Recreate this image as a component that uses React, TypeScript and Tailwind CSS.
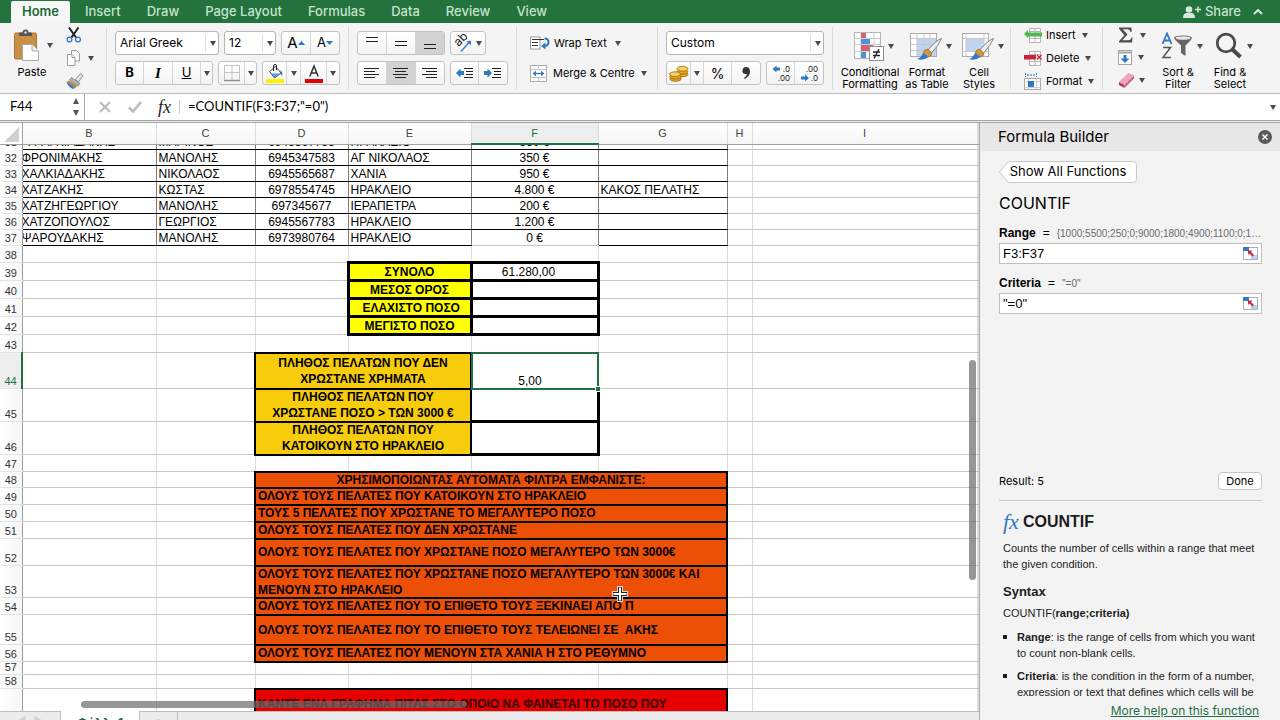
import type { ReactNode } from "react";

const TABS = ["Insert", "Draw", "Page Layout", "Formulas", "Data", "Review", "View"];

const COLUMNS = ["B", "C", "D", "E", "F", "G", "H", "I", ""];

const CLIENTS = [
  { row: 32, name: "ΦΡΟΝΙΜΑΚΗΣ", first: "ΜΑΝΟΛΗΣ", phone: "6945347583", city: "ΑΓ ΝΙΚΟΛΑΟΣ", debt: "350 €", note: "" },
  { row: 33, name: "ΧΑΛΚΙΑΔΑΚΗΣ", first: "ΝΙΚΟΛΑΟΣ", phone: "6945565687", city: "ΧΑΝΙΑ", debt: "950 €", note: "" },
  { row: 34, name: "ΧΑΤΖΑΚΗΣ", first: "ΚΩΣΤΑΣ", phone: "6978554745", city: "ΗΡΑΚΛΕΙΟ", debt: "4.800 €", note: "ΚΑΚΟΣ ΠΕΛΑΤΗΣ" },
  { row: 35, name: "ΧΑΤΖΗΓΕΩΡΓΙΟΥ", first: "ΜΑΝΟΛΗΣ", phone: "697345677", city: "ΙΕΡΑΠΕΤΡΑ", debt: "200 €", note: "" },
  { row: 36, name: "ΧΑΤΖΟΠΟΥΛΟΣ", first: "ΓΕΩΡΓΙΟΣ", phone: "6945567783", city: "ΗΡΑΚΛΕΙΟ", debt: "1.200 €", note: "" },
  { row: 37, name: "ΨΑΡΟΥΔΑΚΗΣ", first: "ΜΑΝΟΛΗΣ", phone: "6973980764", city: "ΗΡΑΚΛΕΙΟ", debt: "0 €", note: "" },
];

const TOTALS = [
  { row: 39, label: "ΣΥΝΟΛΟ", value: "61.280,00" },
  { row: 40, label: "ΜΕΣΟΣ ΟΡΟΣ", value: "" },
  { row: 41, label: " ΕΛΑΧΙΣΤΟ ΠΟΣΟ", value: "" },
  { row: 42, label: "ΜΕΓΙΣΤΟ ΠΟΣΟ", value: "" },
];

const COUNTS = [
  { row: 44, height: "h-[36px]", lines: ["ΠΛΗΘΟΣ ΠΕΛΑΤΩΝ ΠΟΥ ΔΕΝ", "ΧΡΩΣΤΑΝΕ ΧΡΗΜΑΤΑ"] },
  { row: 45, height: "h-[33px]", lines: ["ΠΛΗΘΟΣ ΠΕΛΑΤΩΝ ΠΟΥ", "ΧΡΩΣΤΑΝΕ ΠΟΣΟ > ΤΩΝ 3000 €"] },
  { row: 46, height: "h-[33px]", lines: ["ΠΛΗΘΟΣ ΠΕΛΑΤΩΝ ΠΟΥ", "ΚΑΤΟΙΚΟΥΝ ΣΤΟ ΗΡΑΚΛΕΙΟ"] },
];

const FILTERS = [
  { row: 48, height: "h-[16px]", lines: ["ΧΡΗΣΙΜΟΠΟΙΩΝΤΑΣ ΑΥΤΟΜΑΤΑ ΦΙΛΤΡΑ ΕΜΦΑΝΙΣΤΕ:"] },
  { row: 49, height: "h-[17px]", lines: ["ΟΛΟΥΣ ΤΟΥΣ ΠΕΛΑΤΕΣ ΠΟΥ ΚΑΤΟΙΚΟΥΝ ΣΤΟ ΗΡΑΚΛΕΙΟ"] },
  { row: 50, height: "h-[17px]", lines: ["ΤΟΥΣ 5 ΠΕΛΑΤΕΣ ΠΟΥ ΧΡΩΣΤΑΝΕ ΤΟ ΜΕΓΑΛΥΤΕΡΟ ΠΟΣΟ"] },
  { row: 51, height: "h-[17px]", lines: ["ΟΛΟΥΣ ΤΟΥΣ ΠΕΛΑΤΕΣ ΠΟΥ ΔΕΝ ΧΡΩΣΤΑΝΕ"] },
  { row: 52, height: "h-[27px]", lines: ["ΟΛΟΥΣ ΤΟΥΣ ΠΕΛΑΤΕΣ ΠΟΥ ΧΡΩΣΤΑΝΕ ΠΟΣΟ ΜΕΓΑΛΥΤΕΡΟ ΤΩΝ 3000€"] },
  { row: 53, height: "h-[32px]", lines: ["ΟΛΟΥΣ ΤΟΥΣ ΠΕΛΑΤΕΣ ΠΟΥ ΧΡΩΣΤΑΝΕ ΠΟΣΟ ΜΕΓΑΛΥΤΕΡΟ ΤΩΝ 3000€ ΚΑΙ", "ΜΕΝΟΥΝ ΣΤΟ ΗΡΑΚΛΕΙΟ"] },
  { row: 54, height: "h-[17px]", lines: ["ΟΛΟΥΣ ΤΟΥΣ ΠΕΛΑΤΕΣ ΠΟΥ ΤΟ ΕΠΙΘΕΤΟ ΤΟΥΣ ΞΕΚΙΝΑΕΙ ΑΠΟ Π"] },
  { row: 55, height: "h-[30px]", lines: ["ΟΛΟΥΣ ΤΟΥΣ ΠΕΛΑΤΕΣ ΠΟΥ ΤΟ ΕΠΙΘΕΤΟ ΤΟΥΣ ΤΕΛΕΙΩΝΕΙ ΣΕ  ΑΚΗΣ"] },
  { row: 56, height: "h-[17px]", lines: ["ΟΛΟΥΣ ΤΟΥΣ ΠΕΛΑΤΕΣ ΠΟΥ ΜΕΝΟΥΝ ΣΤΑ ΧΑΝΙΑ Η ΣΤΟ ΡΕΘΥΜΝΟ"] },
];

function Caret({ className = "" }: { className?: string }) {
  return (
    <svg viewBox="0 0 6 5" className={`h-[5px] w-[6px] shrink-0 fill-[#4a4a4a] ${className}`}>
      <path d="M0 0h6L3 5z" />
    </svg>
  );
}

function Divider() {
  return <div className="my-1 w-px shrink-0 bg-[#d9d9d9]" />;
}

/* Bordered strip that holds a run of small toolbar buttons */
function Strip({ children }: { children: ReactNode }) {
  return (
    <div className="flex h-[24px] shrink-0 divide-x divide-[#d4d4d4] overflow-hidden rounded-[3px] border border-[#c3c3c3] bg-linear-to-b from-white to-[#f3f3f3]">
      {children}
    </div>
  );
}

function Tool({ label, width, active, children }: { label: string; width: string; active?: boolean; children: ReactNode }) {
  return (
    <button aria-label={label} className={`flex items-center justify-center ${width} ${active ? "bg-[#d2d2d2]" : ""}`}>
      {children}
    </button>
  );
}

function Picker({ label, value, width }: { label: string; value: string; width: string }) {
  return (
    <div className={`relative ${width}`}>
      <select
        aria-label={label}
        defaultValue={value}
        className="h-[24px] w-full appearance-none rounded-[3px] border border-[#b5b5b5] bg-white pl-1 text-[12px] leading-[20px] text-black"
      >
        <option>{value}</option>
      </select>
      <span className="pointer-events-none absolute inset-y-[3px] right-0 flex w-[14px] items-center justify-center border-l border-[#e2e2e2]">
        <Caret />
      </span>
    </div>
  );
}

function Bars({ rows }: { rows: [number, number, number][] }) {
  return (
    <svg viewBox="0 0 16 12" className="h-[12px] w-[16px]" stroke="#222" strokeWidth="1">
      {rows.map(([x1, x2, y]) => (
        <path key={y} d={`M${x1} ${y}.5H${x2}`} />
      ))}
    </svg>
  );
}

function PasteIcon() {
  return (
    <svg viewBox="0 0 26 32" className="h-[32px] w-[26px]">
      <rect x="0.5" y="4" width="22" height="26" rx="1.5" fill="#c98f45" stroke="#a87433" />
      <path d="M5 7V4.500q0-1 1-1h2.500a3 3 0 0 1 6 0H17q1 0 1 1V7z" fill="#565656" />
      <circle cx="11.500" cy="3.500" r="1.200" fill="#ddd" />
      <path d="M8.500 15.500h9.500l6.500 6.500v9.500h-16z" fill="#fff" stroke="#a9a9a9" />
      <path d="M18 15.500v6.500h6.500" fill="#eee" stroke="#a9a9a9" />
    </svg>
  );
}

function ScissorsIcon() {
  return (
    <svg viewBox="0 0 16 16" className="h-[16px] w-[16px]" fill="none">
      <path d="M3 .5l7 10M12.500 .5l-7 10" stroke="#222" strokeWidth="2" />
      <circle cx="3.500" cy="12.500" r="2.400" stroke="#2f78c4" strokeWidth="1.300" />
      <circle cx="12" cy="12.500" r="2.400" stroke="#2f78c4" strokeWidth="1.300" />
    </svg>
  );
}

function CopyIcon() {
  return (
    <svg viewBox="0 0 16 16" className="h-[16px] w-[16px]" fill="#fff" stroke="#9b9b9b">
      <path d="M5.500 .5h5l3 3v7.500h-8z" />
      <path d="M1.500 4.500h4.500l3 3v8h-7.500z" />
      <path d="M6 4.500v3h3" />
    </svg>
  );
}

function BrushIcon() {
  return (
    <svg viewBox="0 0 18 16" className="h-[16px] w-[18px]">
      <path d="M9.500 6.500l5-6 2.500 2L12.500 9z" fill="#e4e4e4" stroke="#777" strokeWidth=".8" />
      <path d="M5.500 4.500l8.500 6-2 2.500L3.500 7z" fill="#b3b3b3" stroke="#666" strokeWidth=".6" />
      <path d="M3 7.500l8.500 5.500-3 2.500L.5 9z" fill="#b98a4e" />
      <path d="M.5 8.500l8 6.500-1.500 1Q2 14 .5 8.500z" fill="#2f78c4" />
    </svg>
  );
}

function FillIcon() {
  return (
    <svg viewBox="0 0 18 19" className="h-[19px] w-[18px]">
      <path d="M3.500 7.500L9.500 2.500l5.500 6.500-6.500 5z" fill="#f5f5f5" stroke="#444" />
      <path d="M4.500 9.500h9.500L8.500 13.500z" fill="#5b9bdb" />
      <path d="M7.500 7V2q0-1.500 1.500-1.500T10.500 2v4" fill="none" stroke="#222" />
      <path d="M14.500 6q2.500 2 1.500 6-1.500-1-1.500-6" fill="#2f78c4" />
      <rect x="0" y="15" width="18" height="4" fill="#fff200" />
    </svg>
  );
}

function FontColorIcon() {
  return (
    <svg viewBox="0 0 18 19" className="h-[19px] w-[18px]">
      <path d="M4.800 12.500L9 2l4.200 10.500M6.300 9h5.400" fill="none" stroke="#333" strokeWidth="1.500" />
      <rect x="0" y="15" width="18" height="4" fill="#e40000" />
    </svg>
  );
}

function BordersIcon() {
  return (
    <svg viewBox="0 0 18 18" className="h-[18px] w-[18px]" fill="none" stroke="#c4c4c4">
      <path d="M1.500 1.500h15v14M1.500 1.500v14M9 1.500v14M1.500 8.500h15" />
      <path d="M1 16.500h16" stroke="#8c8c8c" strokeWidth="1.500" />
    </svg>
  );
}

function OrientationIcon() {
  return (
    <svg viewBox="0 0 18 18" className="h-[18px] w-[18px] overflow-visible">
      <text fontSize="12" fontFamily="Inter, sans-serif" transform="translate(4.500 13) rotate(-45)" fill="#222">
        ab
      </text>
      <path d="M7 17.500l8-9" stroke="#2f78c4" strokeWidth="1.300" />
      <path d="M17 6.500v4.500L12.500 7.500z" fill="#2f78c4" />
    </svg>
  );
}

function IndentIcon({ left }: { left?: boolean }) {
  return (
    <svg viewBox="0 0 18 12" className="h-[12px] w-[18px]">
      {left ? (
        <path d="M0 6l4.500-4.500v2.500h3.500v4H4.500v2.500z" fill="#2f78c4" />
      ) : (
        <path d="M8 6L3.500 1.500v2.500H0v4h3.500v2.500z" fill="#2f78c4" />
      )}
      <path d="M8 1.500h9M10 4.500h7M10 7.500h7M8 10.500h9" stroke="#222" />
    </svg>
  );
}

function WrapIcon() {
  return (
    <svg viewBox="0 0 20 14" className="h-[14px] w-[20px]" fill="none">
      <rect x=".5" y="1" width="9.500" height="12" fill="#fff" stroke="#999" />
      <path d="M2 3.500h12M2 6.500h6M2 9.500h6" stroke="#333" />
      <path d="M14.500 2.500q4 0 4 3.500t-4 4" stroke="#2f78c4" strokeWidth="2" />
      <path d="M15.500 6.500v7L11 10z" fill="#2f78c4" />
    </svg>
  );
}

function MergeIcon() {
  return (
    <svg viewBox="0 0 17 17" className="h-[17px] w-[17px]" fill="none">
      <rect x=".5" y=".5" width="16" height="16" fill="#fff" stroke="#a9a9a9" />
      <path d="M.5 4.500h16M.5 12.500h16M8.500 .5v4M8.500 12.500v4" stroke="#c4c4c4" />
      <path d="M4 8.500h9" stroke="#2f78c4" strokeWidth="1.300" />
      <path d="M6 5.800v5.400L2.500 8.500zM11 5.800v5.400l3.500-2.700z" fill="#2f78c4" />
    </svg>
  );
}

function CoinsIcon() {
  return (
    <svg viewBox="0 0 20 17" className="h-[17px] w-[20px]" stroke="#8c5a0a" strokeWidth=".7">
      <g fill="#e8a822">
        <ellipse cx="13.500" cy="9.500" rx="5.500" ry="2.200" />
        <ellipse cx="13.500" cy="6.800" rx="5.500" ry="2.200" />
        <ellipse cx="13.500" cy="3.800" rx="5.500" ry="2.400" fill="#f7cf5b" />
        <ellipse cx="6.500" cy="14" rx="5.700" ry="2.300" />
        <ellipse cx="6.500" cy="11.800" rx="5.700" ry="2.300" />
        <ellipse cx="6" cy="9.200" rx="5.500" ry="2.400" fill="#f7cf5b" />
      </g>
    </svg>
  );
}

function DecimalIcon({ more }: { more?: boolean }) {
  return (
    <svg viewBox="0 0 20 17" className="h-[17px] w-[20px]" fontFamily="Inter, sans-serif" fontSize="8" fill="#222">
      <text x="19" y="7" textAnchor="end">{more ? ".0" : ".00"}</text>
      <text x="19" y="16" textAnchor="end">{more ? ".00" : ".0"}</text>
      {more ? (
        <path d="M1.500 4l4-3.500v2H9v3H5.500v2z" fill="#2f78c4" />
      ) : (
        <path d="M10 13L6 9.500v2H2v3h4v2z" fill="#2f78c4" />
      )}
    </svg>
  );
}

function ConditionalIcon() {
  return (
    <svg viewBox="0 0 30 29" className="h-[29px] w-[30px]">
      <rect x=".5" y=".5" width="26" height="26" fill="#fff" stroke="#b5b5b5" />
      <path d="M.5 6.500h26M.5 12.500h26M.5 19.500h26M7 .5v26M20 .5v26" stroke="#ccc" />
      <path d="M7 1h5v5H7zM7 13h12v6H7z" fill="#d9616e" />
      <path d="M7 7h9v5H7zM7 20h5v6H7z" fill="#4d93d9" />
      <rect x="15.500" y="14.500" width="14" height="14" fill="#fff" stroke="#8c8c8c" />
      <path d="M19 20h7M19 23.500h7M25 17l-5 9.500" stroke="#222" strokeWidth="1.300" />
    </svg>
  );
}

function TableBrushIcon({ plain }: { plain?: boolean }) {
  return (
    <svg viewBox="0 0 32 29" className="h-[29px] w-[32px]">
      <rect x=".5" y="1.500" width="26" height="23" fill="#fff" stroke="#aaa" />
      <path d={plain ? "M4 7h18v12H4z" : "M7 7h19v17H7z"} fill="#bdd5f0" />
      <path
        d={plain ? "M.5 6.500h26M.5 19.500h26M4 1.500v23M22 1.500v23" : "M.5 6.500h26M.5 12.500h26M.5 18.500h26M7 1.500v23M14 1.500v23M20 1.500v23"}
        fill="none"
        stroke="#c8c8c8"
      />
      <path d="M31.500 6.500Q25 9 18 18l3.500 3Q29 13 31.500 6.500z" fill="#eee" stroke="#777" strokeWidth=".9" />
      <path d="M18 17q-4 0-5 4l5.500 4q4-1 3-4z" fill="#cf9440" stroke="#94682a" strokeWidth=".6" />
      <path d="M13 21q-2 5-6 6 6 2 11.500-2z" fill="#2f78c4" />
    </svg>
  );
}

function CellsIcon({ kind }: { kind: string }) {
  return (
    <svg viewBox="0 0 18 17" className="h-[17px] w-[18px]" fill="none">
      {kind === "Format" ? (
        <>
          <path d="M1.500 0v4M12.500 0v4M3 2h8" stroke="#2f78c4" strokeDasharray="2 1" />
          <rect x=".5" y="5.500" width="16" height="11" fill="#fff" stroke="#a9a9a9" />
          <path d="M4.500 5.500v11M12.500 5.500v11M.5 8.500h16M.5 14.500h16" stroke="#d0d0d0" />
          <rect x="4" y="8" width="6" height="6" fill="#2f78c4" />
        </>
      ) : (
        <>
          <path d="M5.500 1.500h11v14h-11zM11 1v15M5 11.500h12M5 4.500h12" fill="#fff" stroke="#b5b5b5" />
          {kind === "Insert" ? (
            <path d="M0 7l4-4v2.500h14v4H4V11z" fill="#4db848" />
          ) : (
            <>
              <path d="M0 5h12v4.500H0z" fill="#cf2438" />
              <path d="M13 5l4.500 4.500M17.500 5L13 9.500" stroke="#cf2438" strokeWidth="1.500" />
            </>
          )}
        </>
      )}
    </svg>
  );
}

function SigmaIcon() {
  return (
    <svg viewBox="0 0 16 16" className="h-[16px] w-[16px]" fill="#4d4d4d">
      <path d="M1 .5h12.500V5h-1Q12 2.300 9.500 2.300H4.800l4.700 5.200-5.200 5.700h6q2.700 0 3.200-2.700h1L14 15.500H1v-1.300l5.300-6L1 1.800z" />
    </svg>
  );
}

function FillDownIcon() {
  return (
    <svg viewBox="0 0 14 15" className="h-[15px] w-[14px]">
      <rect x=".5" y=".5" width="13" height="14" fill="#fff" stroke="#a5a5a5" />
      <path d="M.5 2.500h13" stroke="#a5a5a5" strokeWidth="2" />
      <path d="M5.500 5h3v3.500h3L7 13 2.500 8.500h3z" fill="#2f78c4" />
    </svg>
  );
}

function EraserIcon() {
  return (
    <svg viewBox="0 0 17 16" className="h-[16px] w-[17px]">
      <path d="M1 10l9.500-9 5.500 2.500-9.500 9.500z" fill="#f0a3bd" />
      <path d="M1 10l5.500 3v3L1 13z" fill="#a83e60" />
      <path d="M6.500 13L16 3.500v3L6.500 16z" fill="#d0607f" />
    </svg>
  );
}

function SortFilterIcon() {
  return (
    <svg viewBox="0 0 32 28" className="h-[28px] w-[32px]">
      <path d="M1.500 12L6 1.500 10.500 12M3 8.500h6" fill="none" stroke="#2f78c4" strokeWidth="1.800" />
      <path d="M2 15.500h7.500L2 25.500h8" fill="none" stroke="#555" strokeWidth="1.500" />
      <path d="M13 6q0-2.500 9-2.500T31 6q0 1-6.500 7.500V24L20 21v-7.500Q13 7 13 6z" fill="#666" />
      <ellipse cx="22" cy="6" rx="7.500" ry="1.800" fill="#e6e6e6" />
    </svg>
  );
}

function SearchIcon() {
  return (
    <svg viewBox="0 0 28 28" className="h-[28px] w-[28px]" fill="none" stroke="#4a4a4a">
      <circle cx="11" cy="11" r="8.800" strokeWidth="2.700" />
      <path d="M17.500 17.500l8 7.500" strokeWidth="4" />
    </svg>
  );
}

function ShareIcon() {
  return (
    <svg viewBox="0 0 18 14" className="h-[14px] w-[18px] fill-[#d3ebdc]">
      <circle cx="6" cy="4.500" r="3.300" />
      <path d="M0 13q0-5 4-5h4q4 0 4 5z" />
      <path d="M12 4.500h6M15 1.500v6" stroke="#d3ebdc" strokeWidth="1.500" />
    </svg>
  );
}

function BigTool({ lines, icon, width }: { lines: string[]; icon: ReactNode; width: string }) {
  return (
    <button className={`flex flex-col items-center pt-[3px] ${width}`}>
      <span className="flex h-[32px] items-center gap-1 pl-2">
        {icon}
        <Caret />
      </span>
      <span className="mt-1 text-[11px] leading-[12px] text-black">
        {lines.map((line) => (
          <span key={line} className="block whitespace-nowrap">
            {line}
          </span>
        ))}
      </span>
    </button>
  );
}

function Ribbon() {
  return (
    <div className="flex h-[71px] shrink-0 overflow-hidden border-b border-[#bdbdbd] bg-[#f4f4f4] text-[11px] text-black">
      <div className="flex w-[106px] shrink-0 pl-[12px]">
        <button className="flex w-[44px] flex-col items-start pt-1">
          <span className="flex h-[36px] items-center gap-[7px] pl-[2px]">
            <PasteIcon />
            <Caret />
          </span>
          <span className="w-[40px] pt-[3px] text-center leading-[12px]">Paste</span>
        </button>
        <div className="flex flex-col gap-[7px] pt-1 pl-[10px]">
          <button aria-label="Cut"><ScissorsIcon /></button>
          <button aria-label="Copy" className="flex items-center gap-[6px]"><CopyIcon /><Caret /></button>
          <button aria-label="Format painter"><BrushIcon /></button>
        </div>
      </div>
      <Divider />

      <div className="flex shrink-0 flex-col justify-center gap-[6px] px-2">
        <div className="flex gap-[5px]">
          <Picker label="Font" value="Arial Greek" width="w-[104px]" />
          <Picker label="Font size" value="12" width="w-[52px]" />
          <Strip>
            <Tool label="Increase font size" width="w-[29px]">
              <span className="text-[15px]">A</span>
              <svg viewBox="0 0 7 4" className="h-[4px] w-[7px] fill-[#2f78c4]"><path d="M0 4h7L3.500 0z" /></svg>
            </Tool>
            <Tool label="Decrease font size" width="w-[28px]">
              <span className="text-[13px]">A</span>
              <svg viewBox="0 0 7 4" className="h-[4px] w-[7px] fill-[#2f78c4]"><path d="M0 0h7L3.500 4z" /></svg>
            </Tool>
          </Strip>
        </div>
        <div className="flex gap-[5px]">
          <Strip>
            <Tool label="Bold" width="w-[28px]"><b className="text-[13px]">B</b></Tool>
            <Tool label="Italic" width="w-[29px]"><i className="font-['Liberation_Serif',serif] text-[15px] font-bold">I</i></Tool>
            <Tool label="Underline" width="w-[28px]"><u className="text-[13px]">U</u></Tool>
            <Tool label="Underline style" width="w-[11px]"><Caret /></Tool>
          </Strip>
          <Strip>
            <Tool label="Borders" width="w-[26px]"><BordersIcon /></Tool>
            <Tool label="Border style" width="w-[11px]"><Caret /></Tool>
          </Strip>
          <Strip>
            <Tool label="Fill colour" width="w-[24px]"><FillIcon /></Tool>
            <Tool label="Fill colours" width="w-[14px]"><Caret /></Tool>
            <Tool label="Font colour" width="w-[26px]"><FontColorIcon /></Tool>
            <Tool label="Font colours" width="w-[12px]"><Caret /></Tool>
          </Strip>
        </div>
      </div>
      <Divider />

      <div className="flex shrink-0 flex-col justify-center gap-[6px] px-2">
        <div className="flex gap-[5px]">
          <Strip>
            <Tool label="Align top" width="w-[29px]"><Bars rows={[[2, 14, 0], [2, 14, 4]]} /></Tool>
            <Tool label="Align middle" width="w-[29px]"><Bars rows={[[2, 14, 4], [2, 14, 8]]} /></Tool>
            <Tool label="Align bottom" width="w-[28px]" active><Bars rows={[[2, 14, 7], [2, 14, 11]]} /></Tool>
          </Strip>
          <Strip>
            <Tool label="Orientation" width="w-[34px]">
              <span className="flex items-center gap-1"><OrientationIcon /><Caret /></span>
            </Tool>
          </Strip>
        </div>
        <div className="flex gap-[5px]">
          <Strip>
            <Tool label="Align left" width="w-[29px]"><Bars rows={[[0, 15, 1], [0, 11, 4], [0, 15, 7], [0, 11, 10]]} /></Tool>
            <Tool label="Centre" width="w-[29px]" active><Bars rows={[[0, 15, 1], [2, 13, 4], [0, 15, 7], [2, 13, 10]]} /></Tool>
            <Tool label="Align right" width="w-[28px]"><Bars rows={[[0, 15, 1], [4, 15, 4], [0, 15, 7], [4, 15, 10]]} /></Tool>
          </Strip>
          <Strip>
            <Tool label="Decrease indent" width="w-[28px]"><IndentIcon left /></Tool>
            <Tool label="Increase indent" width="w-[28px]"><IndentIcon /></Tool>
          </Strip>
        </div>
      </div>
      <Divider />

      <div className="flex w-[140px] shrink-0 flex-col justify-center gap-[6px] pl-[13px]">
        <button className="flex h-[24px] items-center gap-1 whitespace-nowrap">
          <WrapIcon />
          Wrap Text
          <Caret className="ml-1" />
        </button>
        <button className="flex h-[24px] items-center gap-[6px] whitespace-nowrap">
          <MergeIcon />
          Merge &amp; Centre
          <Caret />
        </button>
      </div>
      <Divider />

      <div className="flex shrink-0 flex-col justify-center gap-[6px] px-2">
        <Picker label="Number format" value="Custom" width="w-full" />
        <div className="flex gap-[5px]">
          <Strip>
            <Tool label="Currency" width="w-[24px]"><CoinsIcon /></Tool>
            <Tool label="Currencies" width="w-[13px]"><Caret /></Tool>
            <Tool label="Percent" width="w-[28px]"><span className="text-[14px]">%</span></Tool>
            <Tool label="Thousands separator" width="w-[28px]">
              <svg viewBox="0 0 8 12" className="h-[12px] w-[8px] fill-[#333]"><path d="M4 0q4 0 4 4.500Q8 9 2.500 12L2 11q3-2 3-4Q0 7.500 .5 3.500 .8 0 4 0z" /></svg>
            </Tool>
          </Strip>
          <Strip>
            <Tool label="Increase decimals" width="w-[28px]"><DecimalIcon more /></Tool>
            <Tool label="Decrease decimals" width="w-[28px]"><DecimalIcon /></Tool>
          </Strip>
        </div>
      </div>
      <Divider />

      <div className="flex shrink-0 pt-1 pr-[6px] pl-[7px]">
        <BigTool lines={["Conditional", "Formatting"]} icon={<ConditionalIcon />} width="w-[60px]" />
        <BigTool lines={["Format", "as Table"]} icon={<TableBrushIcon />} width="w-[54px]" />
        <BigTool lines={["Cell", "Styles"]} icon={<TableBrushIcon plain />} width="w-[50px]" />
      </div>
      <Divider />

      <div className="flex w-[91px] shrink-0 flex-col justify-center gap-[6px] pl-[13px]">
        {["Insert", "Delete", "Format"].map((kind) => (
          <button key={kind} className="flex h-[17px] items-center gap-1">
            <CellsIcon kind={kind} />
            {kind}
            <Caret className="ml-[2px]" />
          </button>
        ))}
      </div>
      <Divider />

      <div className="flex shrink-0 pt-1 pl-[15px]">
        <div className="flex flex-col gap-[7px] pr-[7px]">
          <button aria-label="AutoSum" className="flex items-center gap-[6px]"><SigmaIcon /><Caret /></button>
          <button aria-label="Fill" className="flex items-center gap-[6px]"><FillDownIcon /><Caret /></button>
          <button aria-label="Clear" className="flex items-center gap-1"><EraserIcon /><Caret /></button>
        </div>
        <BigTool lines={["Sort &", "Filter"]} icon={<SortFilterIcon />} width="w-[50px]" />
        <BigTool lines={["Find &", "Select"]} icon={<SearchIcon />} width="w-[54px]" />
      </div>
    </div>
  );
}

function FormulaBar() {
  return (
    <div className="flex h-[27px] shrink-0 items-center border-b border-[#a3a3a3] bg-white">
      <div className="flex h-full w-[85px] items-center justify-between border-r border-[#a9a9a9] pr-1 pl-[10px]">
        <input
          aria-label="Name box"
          defaultValue="F44"
          className="w-[50px] bg-transparent font-['Lato',sans-serif] text-[13px] outline-none"
        />
        <svg viewBox="0 0 8 18" className="h-[18px] w-[8px] fill-[#555]">
          <path d="M1 6h6L4 0zM1 12h6l-3 6z" />
        </svg>
      </div>
      <button aria-label="Cancel" className="ml-[14px]">
        <svg viewBox="0 0 12 12" className="h-[12px] w-[12px]" stroke="#b9b9b9" strokeWidth="2"><path d="M1 1l10 10M11 1L1 11" /></svg>
      </button>
      <button aria-label="Enter" className="ml-[17px]">
        <svg viewBox="0 0 14 12" className="h-[12px] w-[14px]" fill="none" stroke="#b9b9b9" strokeWidth="2.500"><path d="M1 6.500l4 4L13 1" /></svg>
      </button>
      <span className="ml-[16px] font-['Liberation_Serif',serif] text-[18px] text-[#222] italic">fx</span>
      <div className="mx-2 h-[14px] w-px bg-[#ccc]" />
      <input
        aria-label="Formula"
        defaultValue={'=COUNTIF(F3:F37;"=0")'}
        className="min-w-0 flex-1 bg-transparent font-['Lato',sans-serif] text-[13px] outline-none"
      />
      <Caret className="mr-1" />
    </div>
  );
}

const cell = "border-r border-b border-r-[#dcdcdc] border-b-[#c6c6c6] p-0";
const dataCell = "border-r border-b border-r-[#808080] border-b-black px-[2px] py-0 whitespace-nowrap";

function Blank({ count, className = cell }: { count: number; className?: string }) {
  return (
    <>
      {Array.from({ length: count }, (_, i) => (
        <td key={i} className={className} />
      ))}
    </>
  );
}

function RowHead({ row, active }: { row?: number; active?: boolean }) {
  return (
    <th
      scope="row"
      className={`border-b border-b-[#e3e3e3] p-0 pb-[2px] text-center align-bottom text-[11px] leading-[10px] font-normal ${
        active
          ? "border-r-2 border-r-[#1d7042] bg-[#eeeeee] text-[#1d7042]"
          : "border-r border-r-[#9b9b9b] bg-linear-to-r from-white to-[#f6f6f6] text-[#333]"
      }`}
    >
      {row}
    </th>
  );
}

/* Text taller than its row may hang over the cell borders */
function Lines({ lines }: { lines: string[] }) {
  return (
    <div className="-my-1 leading-[16px] whitespace-pre">
      {lines.map((line) => (
        <div key={line}>{line}</div>
      ))}
    </div>
  );
}

function Cut({ children, center }: { children: ReactNode; center?: boolean }) {
  return (
    <div className={`flex h-[4px] items-end overflow-hidden leading-[14px] whitespace-nowrap ${center ? "justify-center" : ""}`}>
      {children}
    </div>
  );
}

function Sheet() {
  return (
    <table className="w-full table-fixed border-collapse font-['Liberation_Sans',Arial,sans-serif] text-[12px] text-black">
      <colgroup>
        <col className="w-[22px]" />
        <col className="w-[134px]" />
        <col className="w-[99px]" />
        <col className="w-[93px]" />
        <col className="w-[123px]" />
        <col className="w-[127px]" />
        <col className="w-[129px]" />
        <col className="w-[25px]" />
        <col className="w-[225px]" />
        <col />
      </colgroup>
      <thead>
        <tr className="h-[21px]">
          <td className="border-r border-b border-[#a3a3a3] p-0 align-bottom">
            <svg viewBox="0 0 15 15" className="mb-[2px] ml-1 h-[15px] w-[15px] fill-[#d0d0d0]"><path d="M15 0v15H0z" /></svg>
          </td>
          {COLUMNS.map((name) => (
            <th
              key={name}
              scope="col"
              className={`border-r border-b p-0 text-[11px] font-normal ${
                name === "F"
                  ? "border-r-[#dcdcdc] border-b-2 border-b-[#1d7042] bg-[#eeeeee] text-[#1d7042]"
                  : "border-r-[#dcdcdc] border-b-[#a3a3a3] bg-linear-to-b from-white to-[#f5f5f5] text-[#444]"
              }`}
            >
              {name}
            </th>
          ))}
        </tr>
      </thead>
      <tbody>
        <tr className="h-[5px]">
          <th scope="row" className="border-r border-r-[#9b9b9b] p-0 text-[11px] font-normal text-[#333]"><Cut center>31</Cut></th>
          <td className={dataCell}><Cut>ΦΡΑΓΚΙΑΔΑΚΗΣ</Cut></td>
          <td className={dataCell}><Cut>ΜΑΡΙΝΟΣ</Cut></td>
          <td className={dataCell}><Cut center>6945567785</Cut></td>
          <td className={dataCell}><Cut>ΗΡΑΚΛΕΙΟ</Cut></td>
          <td className={dataCell}><Cut center>350 €</Cut></td>
          <td className={dataCell} />
          <Blank count={3} />
        </tr>
        {CLIENTS.map((c) => (
          <tr key={c.row} className="h-[16px] leading-[14px]">
            <RowHead row={c.row} />
            <td className="overflow-hidden border-r border-b border-r-[#808080] border-b-black p-0 whitespace-nowrap">
              <div className="-ml-px">{c.name}</div>
            </td>
            <td className={dataCell}>{c.first}</td>
            <td className={`${dataCell} text-center`}>{c.phone}</td>
            <td className={dataCell}>{c.city}</td>
            <td className={`${c.row === 37 ? "border-r border-b border-r-[#808080] border-b-[#c6c6c6] p-0" : dataCell} text-center`}>{c.debt}</td>
            <td className={dataCell}>{c.note}</td>
            <Blank count={3} />
          </tr>
        ))}
        <tr className="h-[17px]">
          <RowHead row={38} />
          <Blank count={9} />
        </tr>
        {TOTALS.map((t) => (
          <tr key={t.row} className="h-[18px] leading-[14px]">
            <RowHead row={t.row} />
            <Blank count={3} />
            <td className="border-3 border-black bg-[#ffff00] p-0 text-center font-bold whitespace-pre">{t.label}</td>
            <td className="border-3 border-black p-0 pr-[12px] text-center">{t.value}</td>
            <Blank count={4} />
          </tr>
        ))}
        <tr className="h-[18px]">
          <RowHead row={43} />
          <Blank count={9} />
        </tr>
        {COUNTS.map((c) => (
          <tr key={c.row} className={c.height}>
            <RowHead row={c.row} active={c.row === 44} />
            <Blank count={2} />
            <td colSpan={2} className="border-2 border-black bg-[#f7cd0b] p-0 text-center font-bold">
              <Lines lines={c.lines} />
            </td>
            {c.row === 44 ? (
              <td className="relative p-0 pr-[10px] text-center align-bottom leading-[16px]">
                5,00
                <span className="absolute -inset-px border-2 border-[#1d7042]" />
                <span className="absolute -right-[3px] -bottom-[3px] h-[6px] w-[6px] border border-white bg-[#1d7042]" />
              </td>
            ) : (
              <td className="border-r-3 border-b-3 border-black p-0" />
            )}
            <Blank count={4} />
          </tr>
        ))}
        <tr className="h-[17px]">
          <RowHead row={47} />
          <Blank count={9} />
        </tr>
        {FILTERS.map((f) => (
          <tr key={f.row} className={f.height}>
            <RowHead row={f.row} />
            <Blank count={2} />
            <td colSpan={4} className={`border-2 border-black bg-[#ec4f06] px-[2px] py-0 font-bold ${f.row === 48 ? "text-center" : ""}`}>
              <Lines lines={f.lines} />
            </td>
            <Blank count={3} />
          </tr>
        ))}
        <tr className="h-[13px]">
          <RowHead row={57} />
          <Blank count={9} />
        </tr>
        <tr className="h-[14px]">
          <RowHead row={58} />
          <Blank count={9} />
        </tr>
        <tr className="h-[31px]">
          <RowHead />
          <Blank count={2} />
          <td colSpan={4} className="border-2 border-black bg-[#e60000] px-[2px] py-0 font-bold text-[#2a0000]">
            <Lines lines={["ΚΑΝΤΕ ΕΝΑ ΓΡΑΦΗΜΑ ΠΙΤΑΣ ΣΤΟ ΟΠΟΙΟ ΝΑ ΦΑΙΝΕΤΑΙ ΤΟ ΠΟΣΟ ΠΟΥ"]} />
          </td>
          <Blank count={3} />
        </tr>
      </tbody>
    </table>
  );
}

function SheetTabs() {
  return (
    <div className="flex h-[9px] shrink-0 overflow-hidden bg-[#ececec] text-[12px] leading-[20px]">
      <div className="flex w-[61px] justify-around border-t border-r border-[#bdbdbd] px-3 text-[#d2d2d2]">
        <span>◀</span>
        <span>▶</span>
      </div>
      <button className="w-[78px] bg-white pt-1 leading-[16px] font-bold text-[#1d7042]">Φύλλο1</button>
      <button className="w-[39px] border-x border-t border-[#bdbdbd] leading-[20px]">+</button>
      <div className="flex-1 border-t border-[#bdbdbd]" />
    </div>
  );
}

function ArgumentField({ label, preview, value }: { label: string; preview: string; value: string }) {
  const id = `argument-${label}`;
  return (
    <div className="font-['Liberation_Sans',Arial,sans-serif]">
      <div className="flex h-[20px] items-center gap-[7px] whitespace-nowrap">
        <label htmlFor={id} className="text-[12px] font-bold">{label}</label>
        <span className="text-[12px]">=</span>
        <span className="text-[10px] text-[#6b6b6b]">{preview}</span>
      </div>
      <div className="flex h-[21px] items-center border border-[#bfbfbf] bg-white pr-[3px] pl-[3px]">
        <input id={id} defaultValue={value} className="min-w-0 flex-1 bg-transparent text-[13px] outline-none" />
        <button aria-label={`Pick ${label}`}>
          <svg viewBox="0 0 15 13" className="h-[13px] w-[15px]">
            <rect x=".5" y=".5" width="14" height="12" fill="#fff" stroke="#9fb3cc" />
            <path d="M0 0h6v4H0z" fill="#3c78be" />
            <path d="M8 8h6v4H8z" fill="#bdd0e8" />
            <path d="M5 3.500h4.500L8 5l3 3-1.500 1.500-3-3L5 8z" fill="#c42a3f" />
          </svg>
        </button>
      </div>
    </div>
  );
}

function FormulaBuilder() {
  return (
    <aside className="flex w-[301px] shrink-0 flex-col border-l border-[#ababab] bg-[#f3f3f3] text-black">
      <div className="flex h-[28px] shrink-0 items-center justify-between bg-[#e7e7e7] pr-2 pl-[18px]">
        <h2 className="text-[15px]">Formula Builder</h2>
        <button aria-label="Close">
          <svg viewBox="0 0 14 14" className="h-[14px] w-[14px]">
            <circle cx="7" cy="7" r="7" fill="#5a5a5a" />
            <path d="M4.500 4.500l5 5M9.500 4.500l-5 5" stroke="#fff" strokeWidth="1.500" />
          </svg>
        </button>
      </div>
      <div className="flex min-h-0 flex-1 flex-col pr-[18px] pl-[19px]">
        <button className="relative mt-[10px] h-[22px] w-[138px] shrink-0 text-[13px]">
          <svg viewBox="0 0 138 22" className="absolute inset-0 h-[22px] w-[138px]">
            <path d="M.5 11L8 2Q9.500 .5 11 .5h123q3.500 0 3.500 3.500v14q0 3.500-3.500 3.500H11q-1.500 0-3-1.500z" fill="#fff" stroke="#c9c9c9" />
          </svg>
          <span className="relative">Show All Functions</span>
        </button>
        <h3 className="mt-[10px] mb-[9px] text-[16px] leading-[21px]">COUNTIF</h3>
        <ArgumentField label="Range" preview="{1000;5500;250;0;9000;1800;4900;1100;0;1…" value="F3:F37" />
        <div className="mt-[9px]">
          <ArgumentField label="Criteria" preview={'"=0"'} value={'"=0"'} />
        </div>
        <div className="mt-auto flex items-center justify-between">
          <span className="text-[11px]">Result: 5</span>
          <button className="h-[18px] w-[44px] rounded-[4px] border border-[#c6c6c6] bg-white text-[11px] leading-[14px]">Done</button>
        </div>
        <hr className="mt-[10px] border-[#c9c9c9]" />
        <div className="h-[195px] overflow-hidden pt-[8px] pl-[4px] font-['Liberation_Sans',Arial,sans-serif] text-[11px] leading-[16px] text-[#1c1c1c]">
          <div className="flex h-[26px] items-center gap-1">
            <span className="font-['Liberation_Serif',serif] text-[22px] text-[#2f78c4] italic">fx</span>
            <h4 className="text-[16px] font-bold">COUNTIF</h4>
          </div>
          <p className="mt-[5px]">Counts the number of cells within a range that meet the given condition.</p>
          <h5 className="mt-[12px] text-[13px] font-bold">Syntax</h5>
          <p className="mt-[5px]">COUNTIF(<b>range;criteria)</b></p>
          <ul className="mt-2 flex flex-col gap-[7px]">
            <li className="flex gap-[10px]">
              <span className="mt-[6px] h-[4px] w-[4px] shrink-0 bg-[#1c1c1c]" />
              <span><b>Range</b>: is the range of cells from which you want to count non-blank cells.</span>
            </li>
            <li className="flex gap-[10px]">
              <span className="mt-[6px] h-[4px] w-[4px] shrink-0 bg-[#1c1c1c]" />
              <span><b>Criteria</b>: is the condition in the form of a number, expression or text that defines which cells will be counted.</span>
            </li>
          </ul>
        </div>
        <a href="#help" className="flex h-[24px] items-end justify-end pr-[3px] text-[12px] text-[#1d7042] underline">
          More help on this function
        </a>
      </div>
    </aside>
  );
}

export default function App() {
  return (
    <div className="flex h-screen flex-col overflow-hidden bg-white font-['Inter',sans-serif]">
      <nav className="flex h-[23px] shrink-0 items-stretch justify-between bg-[#24723d] text-[13px] font-medium text-[#c3e3cd]">
        <div className="flex items-stretch pl-[11px]">
          <button className="mt-px w-[59px] rounded-t-[2px] bg-[#f7f7f7] font-semibold text-[#1d6b3a]">Home</button>
          <div className="flex items-center gap-[26px] pl-[15px]">
            {TABS.map((tab) => (
              <button key={tab}>{tab}</button>
            ))}
          </div>
        </div>
        <div className="flex items-center pr-[17px]">
          <button className="flex items-center gap-1">
            <ShareIcon />
            Share
          </button>
          <button aria-label="Collapse ribbon" className="ml-[12px]">
            <svg viewBox="0 0 10 6" className="h-[6px] w-[10px]" fill="none" stroke="#d3ebdc" strokeWidth="2"><path d="M1 5l4-4 4 4" /></svg>
          </button>
        </div>
      </nav>
      <Ribbon />
      <FormulaBar />
      <div className="h-[2px] shrink-0 border-b border-[#a3a3a3] bg-[#eee]" />
      <main className="flex min-h-0 flex-1">
        <section className="flex min-w-0 flex-1 flex-col">
          <div className="relative min-h-0 flex-1 overflow-hidden">
            <Sheet />
            {/* overlay scrollbars */}
            <div className="absolute top-[237px] right-[3px] h-[220px] w-[7px] rounded-full bg-[#6b6b6b]/70" />
            <div className="absolute bottom-0 left-[81px] mb-[3px] h-[7px] w-[386px] rounded-full bg-[#6b6b6b]/70" />
            {/* mouse pointer */}
            <svg viewBox="0 0 16 16" className="absolute top-[463px] left-[612px] h-[16px] w-[16px]">
              <path d="M8 0v16M0 8h16" stroke="#d9d9d9" strokeWidth="6" />
              <path d="M8 1v14M1 8h14" stroke="#222" strokeWidth="4" />
              <path d="M8 1.500v13M1.500 8h13" stroke="#fff" strokeWidth="2" />
            </svg>
          </div>
          <SheetTabs />
        </section>
        <FormulaBuilder />
      </main>
    </div>
  );
}
